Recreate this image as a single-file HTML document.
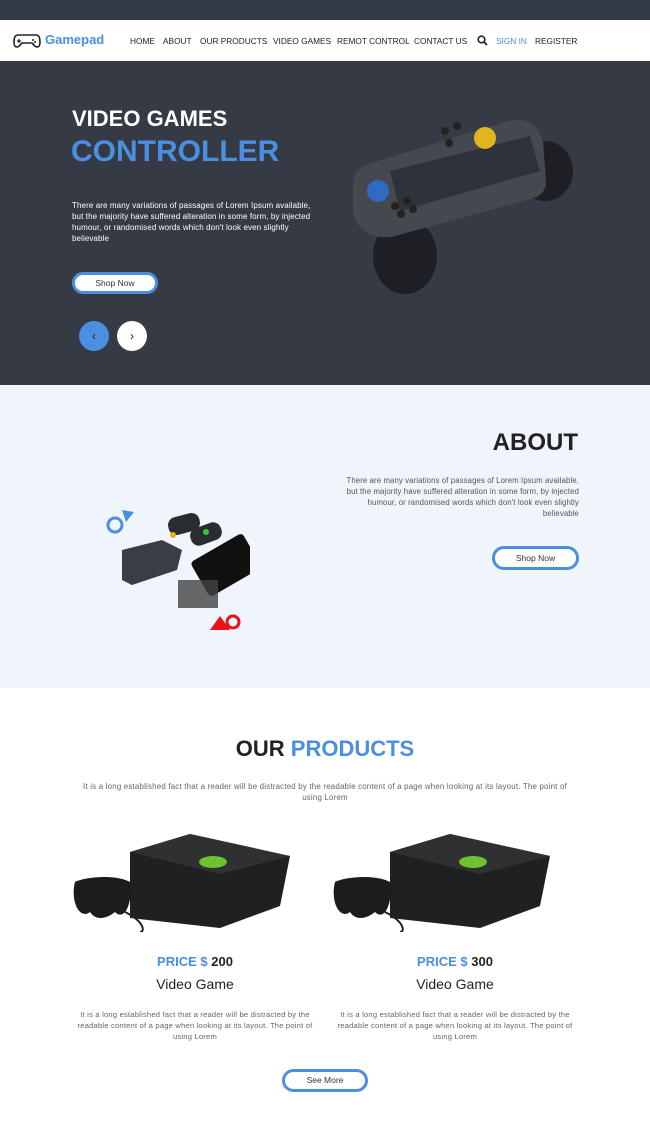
<!DOCTYPE html>
<html><head><meta charset="utf-8"><style>
*{margin:0;padding:0;box-sizing:border-box}
body{width:650px;height:1131px;overflow:hidden;font-family:"Liberation Sans",sans-serif;background:#fff;position:relative;color:#222}
.abs{position:absolute}
.top{left:0;top:0;width:650px;height:20px;background:#343a45}
.nav{left:0;top:20px;width:650px;height:41px;background:#fff}
.nav a{position:absolute;top:16px;font-size:8.3px;color:#222;text-decoration:none}
.hero{left:0;top:61px;width:650px;height:324px;background:#353a45}
.btn{position:absolute;border:3px solid #4a8fe0;border-radius:14px;background:#fff;font-size:8.5px;text-align:center;color:#333}
.about{left:0;top:385px;width:650px;height:303px;background:#f0f5fc}
.pdesc{font-size:7.6px;color:#666;text-align:center;line-height:11px;letter-spacing:.2px}
</style></head><body>
<div class="abs top"></div>
<div class="abs nav">
<svg class="abs" style="left:13px;top:14px" width="28" height="14" viewBox="0 0 28 14"><path d="M5 1h18c3 0 4 3 4 7s-1 5-3 5-3-2-5-4H9c-2 2-3 4-5 4S1 12 1 8s1-7 4-7z" fill="none" stroke="#222" stroke-width="1.6"/><path d="M6 5v4M4 7h4" stroke="#222" stroke-width="1.3"/><circle cx="20" cy="6" r="1" fill="#222"/><circle cx="22" cy="8" r="1" fill="#222"/></svg>
<div class="abs" style="left:45px;top:12px;font-size:13px;color:#4a8fe0;font-weight:bold">Gamepad</div>
<a style="left:130px">HOME</a><a style="left:163px">ABOUT</a><a style="left:200px">OUR PRODUCTS</a><a style="left:273px">VIDEO GAMES</a><a style="left:337px">REMOT CONTROL</a><a style="left:414px">CONTACT US</a>
<svg class="abs" style="left:477px;top:15px" width="11" height="11" viewBox="0 0 11 11"><circle cx="4.5" cy="4.5" r="3.3" fill="none" stroke="#222" stroke-width="1.6"/><path d="M7 7l3 3" stroke="#222" stroke-width="1.8"/></svg>
<a style="left:496px;color:#4a8fe0">SIGN IN</a><a style="left:535px">REGISTER</a>
</div>
<div class="abs hero">
<div class="abs" style="left:72px;top:45px;font-size:22px;font-weight:bold;color:#fff">VIDEO GAMES</div>
<div class="abs" style="left:71px;top:74px;font-size:30px;font-weight:bold;color:#4a8fe0">CONTROLLER</div>
<div class="abs" style="left:72px;top:139px;width:245px;font-size:8px;line-height:11px;color:#fff;letter-spacing:.1px">There are many variations of passages of Lorem Ipsum available, but the majority have suffered alteration in some form, by injected humour, or randomised words which don't look even slightly believable</div>
<div class="btn" style="left:72px;top:211px;width:86px;height:22px;line-height:16px">Shop Now</div>
<div class="abs" style="left:79px;top:260px;width:30px;height:30px;border-radius:50%;background:#4a8fe0;color:#223;text-align:center;line-height:30px;font-size:12px">‹</div>
<div class="abs" style="left:117px;top:260px;width:30px;height:30px;border-radius:50%;background:#fff;color:#222;text-align:center;line-height:30px;font-size:12px">›</div>
<svg class="abs" style="left:345px;top:55px" width="235" height="185" viewBox="0 0 235 185">
<ellipse cx="200" cy="55" rx="28" ry="30" fill="#1d1f24"/>
<ellipse cx="60" cy="140" rx="32" ry="38" fill="#1d1f24"/>
<path d="M8 70c0-15 10-22 25-25l130-40c20-5 30 5 35 20l3 40c0 10-5 15-15 18L50 120c-20 5-40-5-42-25z" fill="#45484f"/>
<path d="M45 55l140-35 10 35-140 40z" fill="#2f3238"/>
<circle cx="140" cy="22" r="11" fill="#e0b51e"/>
<circle cx="33" cy="75" r="11" fill="#2f6bc4"/>
<circle cx="50" cy="90" r="4" fill="#222"/><circle cx="62" cy="85" r="4" fill="#222"/><circle cx="56" cy="98" r="4" fill="#222"/><circle cx="68" cy="93" r="4" fill="#222"/>
<circle cx="100" cy="15" r="4" fill="#222"/><circle cx="112" cy="10" r="4" fill="#222"/><circle cx="104" cy="27" r="4" fill="#222"/>
</svg>
</div>
<div class="abs about">
<div class="abs" style="left:480px;top:44px;width:98px;text-align:right;font-size:24px;font-weight:bold;color:#222">ABOUT</div>
<div class="abs" style="left:335px;top:90px;width:244px;text-align:right;font-size:7.8px;line-height:11px;color:#555;letter-spacing:.1px">There are many variations of passages of Lorem Ipsum available, but the majority have suffered alteration in some form, by injected humour, or randomised words which don't look even slightly believable</div>
<div class="btn" style="left:492px;top:161px;width:87px;height:24px;line-height:18px">Shop Now</div>
<svg class="abs" style="left:100px;top:115px" width="150" height="145" viewBox="0 0 150 145">
<circle cx="15" cy="25" r="7" fill="none" stroke="#4a8fe0" stroke-width="3"/><path d="M22 10l12 2-8 10z" fill="#4a8fe0"/>
<rect x="68" y="15" width="32" height="18" rx="8" fill="#2a2c31" transform="rotate(-15 84 24)"/>
<rect x="90" y="25" width="32" height="18" rx="8" fill="#2a2c31" transform="rotate(-20 106 34)"/>
<path d="M22 50l40-10 20 10-5 20-45 15-10-5z" fill="#3a3d44"/>
<circle cx="73" cy="35" r="3" fill="#e0b51e"/><circle cx="106" cy="32" r="3" fill="#3c3"/>
<rect x="96" y="45" width="60" height="40" rx="4" fill="#111" transform="rotate(-30 126 65)"/>
<rect x="78" y="80" width="40" height="28" fill="#444" opacity=".8"/>
<path d="M110 130l10-14 10 14z" fill="#e8111c"/><circle cx="133" cy="122" r="6" fill="none" stroke="#e8111c" stroke-width="3"/>
</svg>
</div>
<div class="abs" style="left:0;top:736px;width:650px;text-align:center;font-size:22px;font-weight:bold;color:#222">OUR <span style="color:#4a8fe0">PRODUCTS</span></div>
<div class="abs pdesc" style="left:72px;top:781px;width:506px;font-size:7.9px">It is a long established fact that a reader will be distracted by the readable content of a page when looking at its layout. The point of using Lorem</div>
<svg class="abs" style="left:70px;top:832px" width="222" height="100" viewBox="0 0 222 100"><path d="M60 20l60-18 100 22-10 50-60 22-90-10z" fill="#1f2021"/><path d="M60 20l60-18 100 22-70 18z" fill="#2f3031"/><ellipse cx="143" cy="30" rx="14" ry="6" fill="#6fc130"/><path d="M5 50c10-5 40-8 55 0 3 20-5 40-15 30-10 8-20 8-25 0C10 88 0 70 5 50z" fill="#1c1c1c"/><path d="M55 80c20 10 20 20 15 20" stroke="#222" fill="none" stroke-width="2"/></svg>
<svg class="abs" style="left:330px;top:832px" width="222" height="100" viewBox="0 0 222 100"><path d="M60 20l60-18 100 22-10 50-60 22-90-10z" fill="#1f2021"/><path d="M60 20l60-18 100 22-70 18z" fill="#2f3031"/><ellipse cx="143" cy="30" rx="14" ry="6" fill="#6fc130"/><path d="M5 50c10-5 40-8 55 0 3 20-5 40-15 30-10 8-20 8-25 0C10 88 0 70 5 50z" fill="#1c1c1c"/><path d="M55 80c20 10 20 20 15 20" stroke="#222" fill="none" stroke-width="2"/></svg>
<div class="abs" style="left:75px;top:954px;width:240px;text-align:center;font-size:13px;font-weight:bold"><span style="color:#4a8fe0">PRICE $</span> 200</div>
<div class="abs" style="left:75px;top:976px;width:240px;text-align:center;font-size:14px;color:#222">Video Game</div>
<div class="abs pdesc" style="left:75px;top:1009px;width:240px">It is a long established fact that a reader will be distracted by the readable content of a page when looking at its layout. The point of using Lorem</div>
<div class="abs" style="left:335px;top:954px;width:240px;text-align:center;font-size:13px;font-weight:bold"><span style="color:#4a8fe0">PRICE $</span> 300</div>
<div class="abs" style="left:335px;top:976px;width:240px;text-align:center;font-size:14px;color:#222">Video Game</div>
<div class="abs pdesc" style="left:335px;top:1009px;width:240px">It is a long established fact that a reader will be distracted by the readable content of a page when looking at its layout. The point of using Lorem</div>
<div class="btn" style="left:282px;top:1069px;width:86px;height:23px;line-height:17px">See More</div>
</body></html>
